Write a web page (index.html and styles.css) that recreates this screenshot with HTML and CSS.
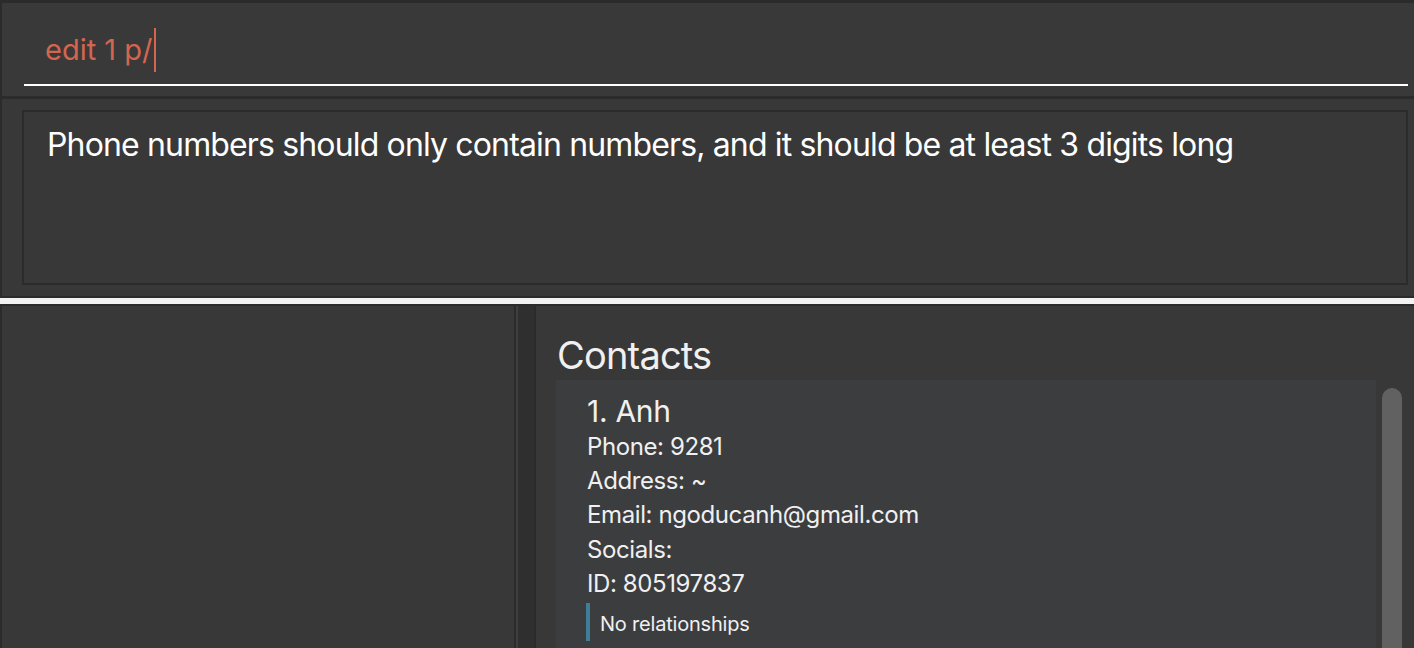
FILE: index.html
```html
<!DOCTYPE html>
<html>
<head>
<meta charset="utf-8">
<link rel="stylesheet" href="styles.css">
</head>
<body>
<div class="app">
  <div class="cmd">
    <div class="field">
      <span class="cmd-text">edit 1 p/</span><span class="caret"></span>
    </div>
  </div>
  <div class="result">
    <div class="result-box">Phone numbers should only contain numbers, and it should be at least 3 digits long</div>
  </div>
  <div class="splitter"></div>
  <div class="bottom">
    <div class="left-pane"></div>
    <div class="divider"><div class="divider-light"></div></div>
    <div class="right-pane">
      <div class="title">Contacts</div>
      <div class="list">
        <div class="card">
          <div class="name">1. Anh</div>
          <div class="line">Phone: 9281</div>
          <div class="line">Address: ~</div>
          <div class="line">Email: ngoducanh@gmail.com</div>
          <div class="line">Socials:</div>
          <div class="line">ID: 805197837</div>
          <div class="rel">No relationships</div>
        </div>
        <div class="scrollbar"><div class="thumb"></div></div>
      </div>
    </div>
  </div>
</div>
</body>
</html>
```

FILE: styles.css
```css
html, body {
  margin: 0;
  padding: 0;
  background: #2b2b2b;
  font-family: Inter, "Noto Sans", sans-serif;
  overflow: hidden;
}
.app {
  width: 1414px;
  height: 648px;
  display: flex;
  flex-direction: column;
  padding-top: 3px;
  padding-left: 2px;
  box-sizing: border-box;
}
.cmd {
  height: 93px;
  background: #393939;
  padding: 25px 6px 0 22px;
  box-sizing: border-box;
}
.field {
  height: 56px;
  border-bottom: 2px solid #ffffff;
  padding-left: 21px;
  display: flex;
  align-items: flex-start;
}
.cmd-text {
  font-size: 29px;
  line-height: 44px;
  color: #d4654f;
  letter-spacing: 0px;
}
.caret {
  display: inline-block;
  width: 2px;
  height: 44px;
  margin-left: 1px;
  background: #d4654f;
}
.result {
  margin-top: 3px;
  height: 197px;
  background: #383838;
  padding: 11px 6px 11px 20px;
  box-sizing: border-box;
}
.result-box {
  height: 100%;
  box-sizing: border-box;
  border: 2px solid #2b2b2b;
  padding: 13px 0 0 23px;
  font-size: 32px;
  line-height: 40px;
  color: #ffffff;
  letter-spacing: -0.85px;
}
.splitter {
  margin-top: 2px;
  margin-left: -2px;
  height: 6px;
  background: #f2f2f2;
}
.bottom {
  margin-top: 2px;
  flex: 1;
  display: flex;
  min-height: 0;
}
.left-pane {
  width: 512px;
  background: #383838;
}
.divider {
  width: 18px;
  background: #2f2f2f;
  border-left: 2px solid #2b2b2b;
  border-right: 2px solid #2b2b2b;
  display: flex;
}
.divider-light {
  width: 2px;
  background: #3f3f3f;
}
.right-pane {
  flex: 1;
  background: #383838;
  padding: 25px 0 0 20px;
  display: flex;
  flex-direction: column;
  min-width: 0;
}
.title {
  font-size: 38px;
  line-height: 49px;
  color: #f0f0f0;
  letter-spacing: -0.8px;
  margin-left: 1px;
}
.list {
  flex: 1;
  display: flex;
  min-height: 0;
}
.card {
  width: 820px;
  background: #3c3d3f;
  padding: 13px 0 0 31px;
  box-sizing: border-box;
  color: #f0f0f0;
}
.name {
  font-size: 30px;
  line-height: 37px;
  letter-spacing: -0.3px;
}
.line {
  font-size: 24px;
  line-height: 34.2px;
  letter-spacing: -0.4px;
}
.rel {
  margin-top: 2px;
  margin-left: -1px;
  border-left: 4px solid #3e7e98;
  padding-left: 10px;
  padding-top: 4px;
  font-size: 20px;
  line-height: 34px;
  letter-spacing: -0.2px;
}
.scrollbar {
  width: 38px;
  padding: 8px 0 0 6px;
  box-sizing: border-box;
}
.thumb {
  width: 20px;
  height: 100%;
  background: #616161;
  border-radius: 10px 10px 0 0;
}
```
